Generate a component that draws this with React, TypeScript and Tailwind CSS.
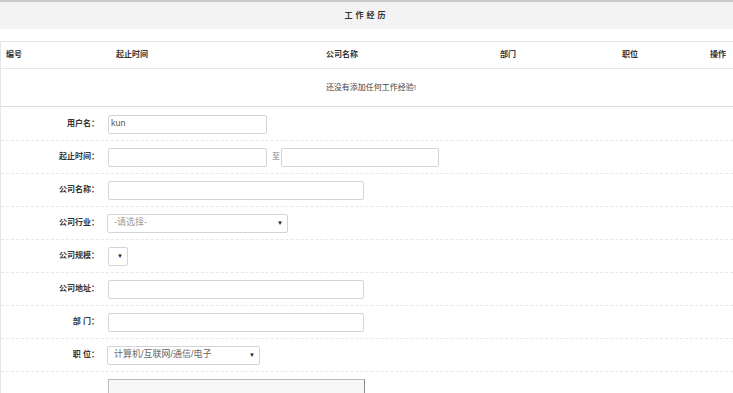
import React from 'react';

const cols = [
  { title: '编号', w: 'w-[110px]' },
  { title: '起止时间', w: 'w-[210px]' },
  { title: '公司名称', w: 'w-[174px]' },
  { title: '部门', w: 'w-[122px]' },
  { title: '职位', w: 'w-[88px]' },
  { title: '操作', w: 'flex-1' },
];

function Row({ label, children, first }: { label: string; children: React.ReactNode; first?: boolean }) {
  return (
    <div className={`flex ${first ? 'h-[34px] pt-px' : 'h-[33px]'} items-center border-b border-dashed border-[#e8e8e8]`}>
      <div className="w-[98px] text-right text-[8px] font-bold text-[#333]">{label}</div>
      <div className="ml-[9px] flex items-center">{children}</div>
    </div>
  );
}

function TextInput({ w, value }: { w: string; value?: string }) {
  return (
    <div className={`${w} flex h-[19px] items-center rounded-[2px] border border-[#d4d4d4] bg-white px-[2px] text-[9px] text-[#555]`}>
      {value}
    </div>
  );
}

function FakeSelect({ w, text, muted }: { w: string; text?: string; muted?: boolean }) {
  return (
    <div className={`${w} -ml-px flex h-[19px] items-center justify-between rounded-[2px] border border-[#d4d4d4] bg-white pl-[6px] pr-[4px] text-[9px] ${muted ? 'text-[#999]' : 'text-[#666]'}`}>
      <span>{text}</span>
      <span className="text-[6px] text-[#222]">▼</span>
    </div>
  );
}

export default function App() {
  return (
    <div className="h-[393px] w-[733px] overflow-hidden bg-white font-['Liberation_Sans','Noto_Sans_CJK_SC',sans-serif]">
      <div className="h-[3px] border-t-2 border-[#c9c9c9] bg-[#f3f3f3]" />
      <div className="flex h-[26px] items-center justify-center bg-[#f3f3f3] text-[8px] font-bold tracking-[3px] text-[#333]">
        工作经历
      </div>
      <div className="h-[12px]" />

      <div className="border-l border-[#e6e6e6]">
        <div className="flex h-[28px] items-center border-y border-[#e6e6e6] text-[8px] font-bold text-[#333]">
          {cols.map(c => (
            <div key={c.title} className={`${c.w} pl-[5px]`}>{c.title}</div>
          ))}
        </div>
        <div className="flex h-[38px] items-center justify-center border-b border-[#dcdcdc] pl-[8px] text-[8px] text-[#444]">
          还没有添加任何工作经验!
        </div>

        <Row label="用户名：" first>
          <TextInput w="w-[159px]" value="kun" />
        </Row>
        <Row label="起止时间：">
          <TextInput w="w-[159px]" />
          <span className="ml-[5px] mr-px text-[8px] text-[#777]">至</span>
          <TextInput w="w-[158px]" />
        </Row>
        <Row label="公司名称：">
          <TextInput w="w-[256px]" />
        </Row>
        <Row label="公司行业：">
          <FakeSelect w="w-[181px]" text="-请选择-" muted />
        </Row>
        <Row label="公司规模：">
          <div className="flex h-[19px] w-[20px] items-center justify-end rounded-[2px] border border-[#d4d4d4] bg-white pr-[4px] text-[6px] text-[#222]">▼</div>
        </Row>
        <Row label="公司地址：">
          <TextInput w="w-[256px]" />
        </Row>
        <Row label="部  门：">
          <TextInput w="w-[256px]" />
        </Row>
        <Row label="职  位：">
          <FakeSelect w="w-[153px]" text="计算机/互联网/通信/电子" />
        </Row>
        <div className="flex pt-[7px]">
          <div className="ml-[107px] h-[40px] w-[257px] border border-[#bbb] border-r-[#888] bg-[#f7f7f7]" />
        </div>
      </div>
    </div>
  );
}
